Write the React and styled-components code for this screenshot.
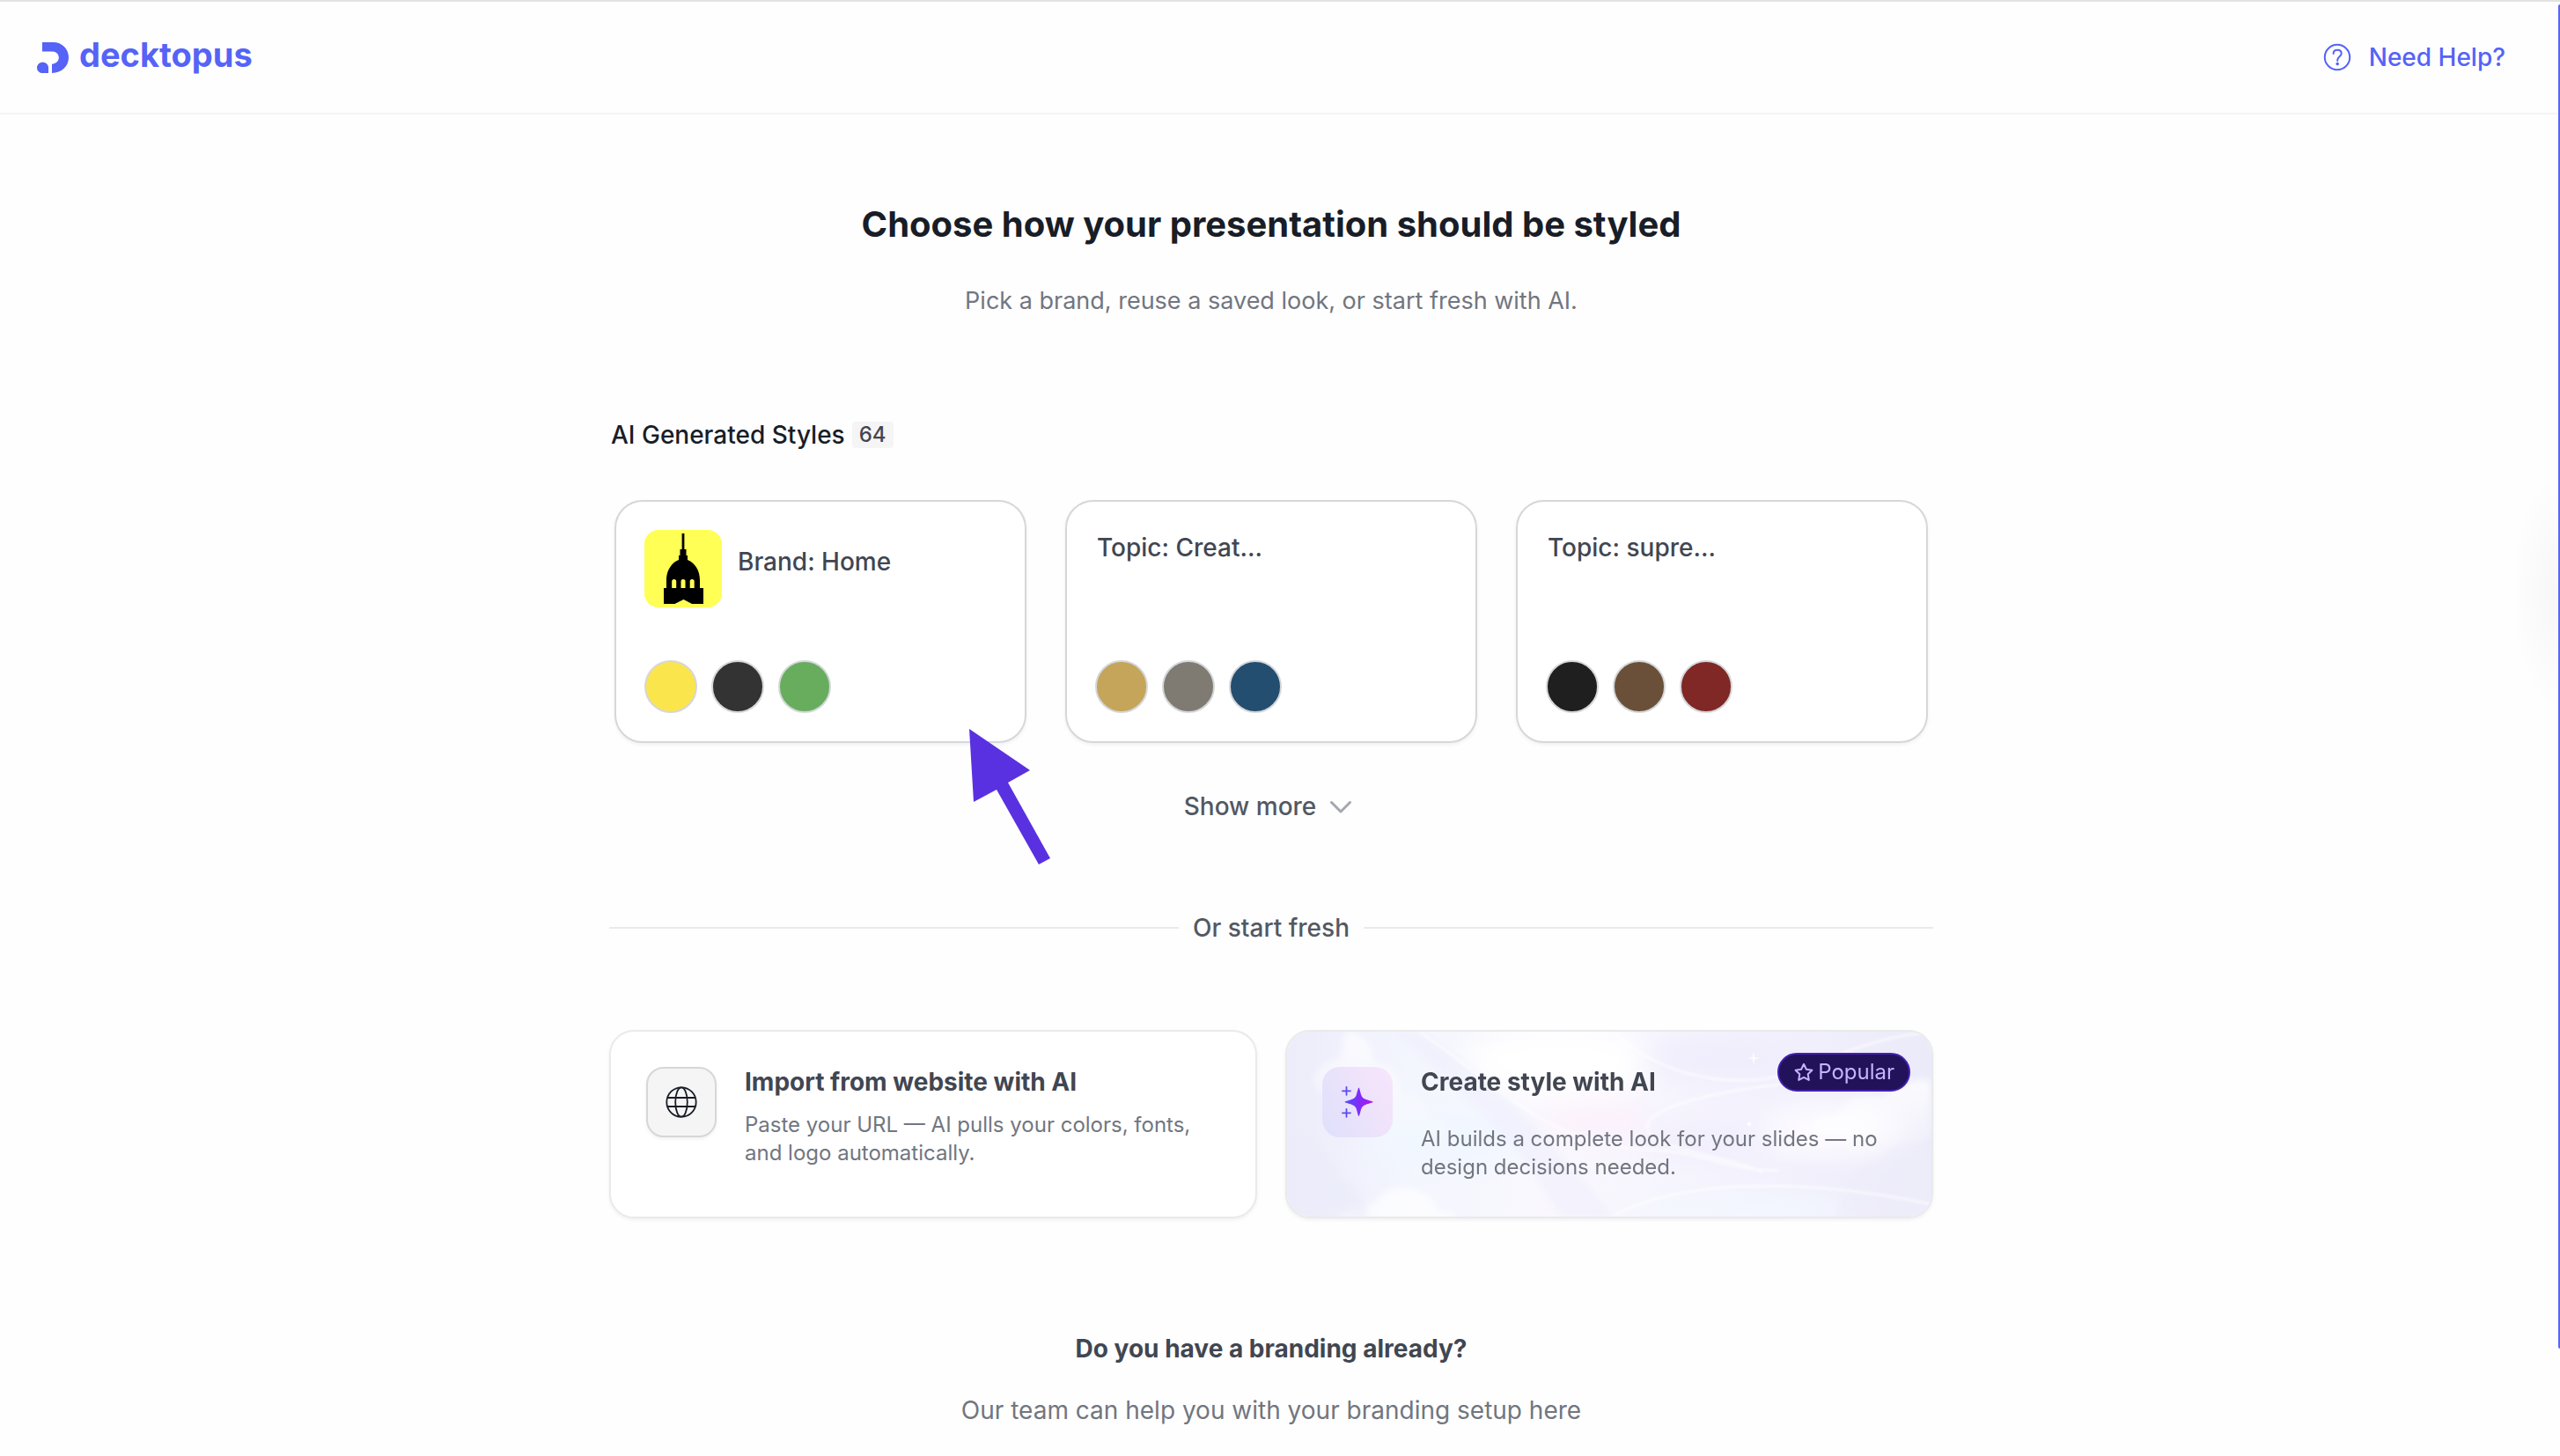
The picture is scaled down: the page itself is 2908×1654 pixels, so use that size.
import React from "react";
import styled, { createGlobalStyle } from "styled-components";

const savedStyles = [
  { name: "Brand: Home", logo: true, colors: ["#fbe54d", "#333333", "#67ad5d"] },
  { name: "Topic: Creat...", colors: ["#c4a55a", "#7f7b72", "#234e70"] },
  { name: "Topic: supre...", colors: ["#1f1f1f", "#6b5039", "#7f2825"] },
];

function LogoMark() {
  return (
    <svg width="36" height="35" viewBox="0 0 36 35" fill="#5563f7" aria-hidden="true">
      <path d="M6 0H18.500C28.500 0 36 7.600 36 17.300C36 27.200 28 35 17 35V24.800C21.500 24.500 24.800 21.500 24.800 17.600C24.800 13.500 21.800 10.500 17.500 10.500H6Z" />
      <path d="M13 35H6.500C2.800 35 0 32.300 0 28.900C0 25.500 2.800 22.800 6.500 22.800C10.200 22.800 13 25.500 13 28.900Z" />
    </svg>
  );
}

function HelpIcon() {
  return (
    <svg width="32" height="32" viewBox="0 0 32 32" fill="none" stroke="#5563f7" strokeWidth="2" aria-hidden="true">
      <circle cx="16" cy="16" r="14.200" />
      <path d="M11.600 12C11.600 9.300 13.500 7.800 16.200 7.800C18.900 7.800 20.700 9.400 20.700 11.700C20.700 15.200 16.200 15.400 16.200 19.400V20" strokeLinecap="round" />
      <circle cx="16.200" cy="23.600" r="1.800" fill="#5563f7" stroke="none" />
    </svg>
  );
}

function CapitolIcon() {
  return (
    <svg width="88" height="88" viewBox="0 0 88 88" aria-hidden="true">
      <path d="M42.600 4H45.400V22H47.500V29H49V34C57.500 37.500 63 46 63 57V66H67V84H54L44.500 79L34.500 84H22V66H25V57C25 46 30.500 37.500 39 34V29H40.500V22H42.600Z" />
      <g fill="#ffff55">
        <path d="M31.200 66V58.500a2.500 2.500 0 0 1 5 0V66Z" />
        <path d="M41.500 66V58.500a2.500 2.500 0 0 1 5 0V66Z" />
        <path d="M51.700 66V58.500a2.500 2.500 0 0 1 5 0V66Z" />
      </g>
    </svg>
  );
}

function ChevronIcon() {
  return (
    <svg width="32" height="32" viewBox="0 0 32 32" fill="none" stroke="#a4a7ae" strokeWidth="3" strokeLinecap="round" strokeLinejoin="round" aria-hidden="true">
      <path d="M5.500 11.500L16 22L26.500 11.500" />
    </svg>
  );
}

function GlobeIcon() {
  return (
    <svg width="36" height="36" viewBox="0 0 36 36" fill="none" stroke="#171c26" strokeWidth="1.800" aria-hidden="true">
      <circle cx="18" cy="18" r="16.700" />
      <ellipse cx="18" cy="18" rx="6.800" ry="16.700" />
      <path d="M2 13H34M2 23H34" />
    </svg>
  );
}

function SparkleIcon() {
  return (
    <svg width="40" height="40" viewBox="0 0 40 40" aria-hidden="true">
      <defs>
        <linearGradient id="sparkle" x1="0" x2="1">
          <stop offset="0" stopColor="#4f52fb" />
          <stop offset="0.500" stopColor="#7f2cf9" />
          <stop offset="1" stopColor="#b315ec" />
        </linearGradient>
      </defs>
      <path fill="url(#sparkle)" d="M21.500 3.500C22.300 3.500 23 8 24.300 12C25.200 14.600 26.600 15.700 29.200 16.700C33 18.100 37.700 19 37.700 19.800C37.700 20.600 33 21.500 29.200 22.900C26.600 23.900 25.200 25 24.300 27.600C23 31.600 22.300 36 21.500 36C20.700 36 20 31.600 18.700 27.600C17.800 25 16.400 23.900 13.800 22.900C10 21.500 5.500 20.600 5.500 19.800C5.500 19 10 18.100 13.800 16.700C16.400 15.700 17.800 14.600 18.700 12C20 8 20.700 3.500 21.500 3.500Z" />
      <path d="M7.500 2.800V11.800M3 7.300H12M7.500 27.800V36.800M3 32.300H12" stroke="#5a4bf5" strokeWidth="1.800" strokeLinecap="round" />
    </svg>
  );
}

function StarIcon() {
  return (
    <svg width="24" height="24" viewBox="0 0 24 24" fill="none" stroke="#c3b5fd" strokeWidth="2" strokeLinejoin="round" aria-hidden="true">
      <path d="M12 2.800L14.900 8.800L21.400 9.700L16.700 14.300L17.800 20.900L12 17.800L6.200 20.900L7.300 14.300L2.600 9.700L9.100 8.800Z" />
    </svg>
  );
}

// soft clouds and light trails behind the "Create style" option
function Clouds() {
  return (
    <CloudArt viewBox="0 0 732 210" preserveAspectRatio="none" aria-hidden="true">
      <defs>
        <linearGradient id="sky" x1="0" x2="1">
          <stop offset="0" stopColor="#ececfa" />
          <stop offset="0.200" stopColor="#f4f6fe" />
          <stop offset="0.420" stopColor="#faf8fe" />
          <stop offset="0.700" stopColor="#f4f2fd" />
          <stop offset="1" stopColor="#ebeaf9" />
        </linearGradient>
        <linearGradient id="cloud" x1="0" y1="0" x2="0" y2="1">
          <stop offset="0" stopColor="#ffffff" />
          <stop offset="1" stopColor="#ffffff" stopOpacity="0" />
        </linearGradient>
        <filter id="soft"><feGaussianBlur stdDeviation="16" /></filter>
        <filter id="puff"><feGaussianBlur stdDeviation="4" /></filter>
        <filter id="trail"><feGaussianBlur stdDeviation="1.500" /></filter>
      </defs>
      <rect width="732" height="210" fill="url(#sky)" />
      <g filter="url(#soft)">
        <ellipse cx="310" cy="34" rx="110" ry="40" fill="#ffffff" />
        <ellipse cx="180" cy="120" rx="90" ry="34" fill="#f1f7ff" />
        <ellipse cx="350" cy="100" rx="60" ry="22" fill="#fcf1fc" />
        <ellipse cx="470" cy="124" rx="70" ry="16" fill="#f1eefc" />
        <ellipse cx="520" cy="205" rx="130" ry="18" fill="#f3f8ff" />
        <ellipse cx="490" cy="30" rx="90" ry="22" fill="#efedfc" />
        <ellipse cx="620" cy="110" rx="80" ry="30" fill="#fdfbff" />
      </g>
      <g filter="url(#puff)">
        <path d="M66 0C90 2 100 16 98 34C120 36 132 52 130 68C150 70 162 84 164 98C190 104 200 122 204 140L80 120L30 60C30 44 44 30 60 32Z" fill="url(#cloud)" opacity="0.700" />
        <path d="M60 210C70 196 88 192 98 198C106 180 124 174 142 178C160 184 172 194 170 204C182 202 190 206 194 214H60Z" fill="#ffffff" opacity="0.700" />
        <path d="M732 56C710 50 690 66 672 74C650 70 632 78 626 92C602 92 590 104 588 116C566 120 556 134 548 148L640 160L732 120Z" fill="url(#cloud)" opacity="0.800" />
        <path d="M0 122C30 118 50 140 62 168C80 176 90 196 94 210H0Z" fill="#ebebf9" opacity="0.700" />
        <path d="M732 130C706 120 684 130 672 150C644 160 630 184 626 210H732Z" fill="#eeedfa" opacity="0.700" />
        <path d="M150 0C230 50 290 110 370 210H310C270 130 200 70 120 0Z" fill="#efeefc" opacity="0.600" />
      </g>
      <g filter="url(#trail)" fill="none" stroke="#ffffff" strokeWidth="3" opacity="0.600">
        <path d="M150 0C240 60 300 132 412 134C470 136 500 158 560 158" />
        <path d="M372 0C400 30 460 62 540 54C600 46 640 10 720 2" />
        <path d="M560 60C470 70 400 90 410 112C420 136 500 140 540 160" />
        <path d="M370 210C420 180 540 156 732 196" />
      </g>
      <g fill="#ffffff">
        <path d="M530 22L531 29L537 30L531 31L530 38L529 31L523 30L529 29Z" />
        <path d="M525 101L526 104L529 105L526 106L525 109L524 106L521 105L524 104Z" />
      </g>
    </CloudArt>
  );
}

function App() {
  return (
    <Page>
      <GlobalStyle />
      <Header>
        <Logo href="#">
          <LogoMark />
          <Wordmark>decktopus</Wordmark>
        </Logo>
        <HelpLink href="#help">
          <HelpIcon />
          Need Help?
        </HelpLink>
      </Header>
      <Main>
        <Title>Choose how your presentation should be styled</Title>
        <Subtitle>Pick a brand, reuse a saved look, or start fresh with AI.</Subtitle>
        <SectionHead>
          <SectionTitle>AI Generated Styles</SectionTitle>
          <Count>64</Count>
        </SectionHead>
        <StyleGrid>
          {savedStyles.map((item) => (
            <StyleItem key={item.name}>
              <StyleCard type="button">
                <CardTop>
                  {item.logo && <BrandLogo><CapitolIcon /></BrandLogo>}
                  <StyleName $withLogo={item.logo}>{item.name}</StyleName>
                </CardTop>
                <Swatches>
                  {item.colors.map((color) => <Swatch key={color} $color={color} />)}
                </Swatches>
              </StyleCard>
              {item.logo && (
                <Arrow viewBox="0 0 92 154" aria-hidden="true">
                  <path fill="#5a31e0" d="M0 0L69 47L44 61L92 147L79 154L31 69L5 83Z" />
                </Arrow>
              )}
            </StyleItem>
          ))}
        </StyleGrid>
        <ShowMore type="button">
          Show more
          <ChevronIcon />
        </ShowMore>
        <Divider>Or start fresh</Divider>
        <OptionGrid>
          <Option type="button">
            <IconBox>
              <GlobeIcon />
            </IconBox>
            <OptionBody>
              <OptionTitle>Import from website with AI</OptionTitle>
              <OptionText>Paste your URL — AI pulls your colors, fonts, and logo automatically.</OptionText>
            </OptionBody>
          </Option>
          <Option type="button">
            <Clouds />
            <IconBox $tinted>
              <SparkleIcon />
            </IconBox>
            <OptionBody $roomy>
              <OptionTitle>Create style with AI</OptionTitle>
              <OptionText>AI builds a complete look for your slides — no design decisions needed.</OptionText>
            </OptionBody>
            <Popular>
              <StarIcon />
              Popular
            </Popular>
          </Option>
        </OptionGrid>
        <BrandingTitle>Do you have a branding already?</BrandingTitle>
        <BrandingText>Our team can help you with your branding setup here</BrandingText>
      </Main>
      <EdgeGlow />
      <EdgeBar />
    </Page>
  );
}

const GlobalStyle = createGlobalStyle`
  * {
    box-sizing: border-box;
  }
  body {
    margin: 0;
    background-color: #fefefe;
    font-family: Inter, "Liberation Sans", sans-serif;
    font-size: 28px;
    color: #414651;
  }
  h1, h2, p {
    margin: 0;
  }
  button {
    font: inherit;
    color: inherit;
    text-align: left;
    cursor: pointer;
  }
  svg {
    display: block;
    flex-shrink: 0;
  }
`;
const Page = styled.div`
  position: relative;
  min-height: 100vh;
  overflow: hidden;
`;
const Header = styled.header`
  display: flex;
  justify-content: space-between;
  align-items: center;
  height: 130px;
  padding: 0 62px 0 42px;
  border-top: 2px solid #e2e2e2;
  border-bottom: 2px solid #f4f4f5;
`;
const Logo = styled.a`
  display: flex;
  align-items: center;
  gap: 12px;
  color: #5563f7;
  text-decoration: none;
`;
const Wordmark = styled.span`
  padding-bottom: 6px;
  font-size: 38px;
  line-height: 40px;
  font-weight: 700;
`;
const HelpLink = styled.a`
  display: flex;
  align-items: center;
  gap: 20px;
  color: #5563f7;
  font-weight: 500;
  line-height: 32px;
  text-decoration: none;
`;
const Main = styled.main`
  display: flex;
  flex-direction: column;
  align-items: center;
  padding: 98px 20px 32px 0;
`;
const Title = styled.h1`
  font-size: 40px;
  line-height: 54px;
  font-weight: 700;
  color: #181d27;
`;
const Subtitle = styled.p`
  margin-top: 40px;
  font-size: 27px;
  line-height: 40px;
  color: #717680;
`;
const SectionHead = styled.div`
  display: flex;
  align-items: center;
  gap: 8px;
  width: 100%;
  max-width: 1504px;
  margin-top: 116px;
  padding: 0 2px;
`;
const SectionTitle = styled.h2`
  font-size: 28px;
  line-height: 32px;
  font-weight: 500;
  color: #181d27;
`;
const Count = styled.span`
  padding: 0 8px;
  border-radius: 4px;
  background-color: #f5f5f5;
  font-size: 24px;
  line-height: 30px;
  font-weight: 500;
`;
const StyleGrid = styled.div`
  display: grid;
  grid-template-columns: repeat(3, 1fr);
  gap: 44px;
  width: 100%;
  max-width: 1504px;
  margin-top: 58px;
  padding: 0 6px;
`;
const StyleItem = styled.div`
  display: flex;
  position: relative;
`;
const StyleCard = styled.button`
  display: flex;
  flex-direction: column;
  justify-content: space-between;
  gap: 60px;
  flex: 1;
  padding: 32px;
  border: 2px solid #d5d7da;
  border-radius: 32px;
  background-color: #ffffff;
  box-shadow: 0 2px 4px rgba(10, 13, 18, 0.06);
`;
const CardTop = styled.span`
  display: flex;
  align-items: flex-start;
  gap: 16px;
`;
const BrandLogo = styled.span`
  border-radius: 16px;
  background-color: #ffff55;
`;
const StyleName = styled.span`
  padding: ${({ $withLogo }) => ($withLogo ? "16px 2px" : "0 2px")};
  line-height: 40px;
  font-weight: 500;
`;
const Swatches = styled.span`
  display: flex;
  gap: 16px;
`;
const Swatch = styled.span`
  width: 60px;
  height: 60px;
  border: 2px solid #d5d7da;
  border-radius: 50%;
  background-color: ${({ $color }) => $color};
`;
const Arrow = styled.svg`
  position: absolute;
  right: -27px;
  bottom: -138px;
  width: 92px;
  z-index: 1;
  pointer-events: none;
`;
const ShowMore = styled.button`
  display: flex;
  align-items: center;
  gap: 12px;
  margin-top: 52px;
  padding: 0 4px 0 0;
  border: none;
  background: none;
  color: #535862;
  font-weight: 500;
  line-height: 40px;
`;
const Divider = styled.div`
  display: flex;
  align-items: center;
  gap: 16px;
  width: 100%;
  max-width: 1504px;
  margin-top: 98px;
  color: #535862;
  line-height: 40px;
  font-weight: 500;
  &::before,
  &::after {
    content: "";
    flex: 1;
    height: 2px;
    background-color: #e9eaeb;
  }
`;
const OptionGrid = styled.div`
  display: grid;
  grid-template-columns: repeat(2, 1fr);
  gap: 32px;
  width: 100%;
  max-width: 1504px;
  margin-top: 96px;
`;
const Option = styled.button`
  display: flex;
  align-items: flex-start;
  gap: 32px;
  position: relative;
  min-height: 214px;
  padding: 40px;
  overflow: hidden;
  border: 2px solid #e9eaeb;
  border-radius: 28px;
  background-color: #ffffff;
  box-shadow: 0 2px 4px rgba(10, 13, 18, 0.06);
`;
const CloudArt = styled.svg`
  position: absolute;
  inset: 0;
  width: 100%;
  height: 100%;
`;
const IconBox = styled.span`
  display: flex;
  align-items: center;
  justify-content: center;
  flex-shrink: 0;
  position: relative;
  width: 80px;
  height: 80px;
  border: ${({ $tinted }) => ($tinted ? "none" : "2px solid #d5d7da")};
  border-radius: 20px;
  background: ${({ $tinted }) => ($tinted ? "linear-gradient(60deg, #dfe0fb, #f8e5fb)" : "#f5f5f5")};
  box-shadow: ${({ $tinted }) => ($tinted ? "none" : "0 2px 4px rgba(10, 13, 18, 0.06)")};
`;
const OptionBody = styled.span`
  display: flex;
  flex-direction: column;
  gap: ${({ $roomy }) => ($roomy ? "32px" : "16px")};
  position: relative;
`;
const OptionTitle = styled.span`
  line-height: 34px;
  font-weight: 700;
`;
const OptionText = styled.span`
  color: #717680;
  font-size: 24px;
  line-height: 32px;
`;
const Popular = styled.span`
  display: flex;
  align-items: center;
  gap: 4px;
  position: absolute;
  top: 24px;
  right: 24px;
  padding: 0 16px;
  border: 2px solid #4320b0;
  border-radius: 22px;
  background-color: #22125a;
  color: #c3b5fd;
  font-size: 24px;
  line-height: 40px;
`;
const BrandingTitle = styled.h2`
  margin-top: 128px;
  font-size: 28px;
  line-height: 40px;
  font-weight: 700;
`;
const BrandingText = styled.p`
  margin-top: 30px;
  line-height: 40px;
  color: #717680;
`;
const EdgeGlow = styled.div`
  position: absolute;
  top: 532px;
  right: 0;
  width: 60px;
  height: 280px;
  background: radial-gradient(56px 136px at right, rgba(0, 0, 0, 0.03), transparent);
`;
const EdgeBar = styled.div`
  position: absolute;
  top: 5px;
  right: 0;
  bottom: 122px;
  width: 2px;
  border-radius: 2px 0 0 2px;
  background-color: #5865f9;
`;

export default App;
